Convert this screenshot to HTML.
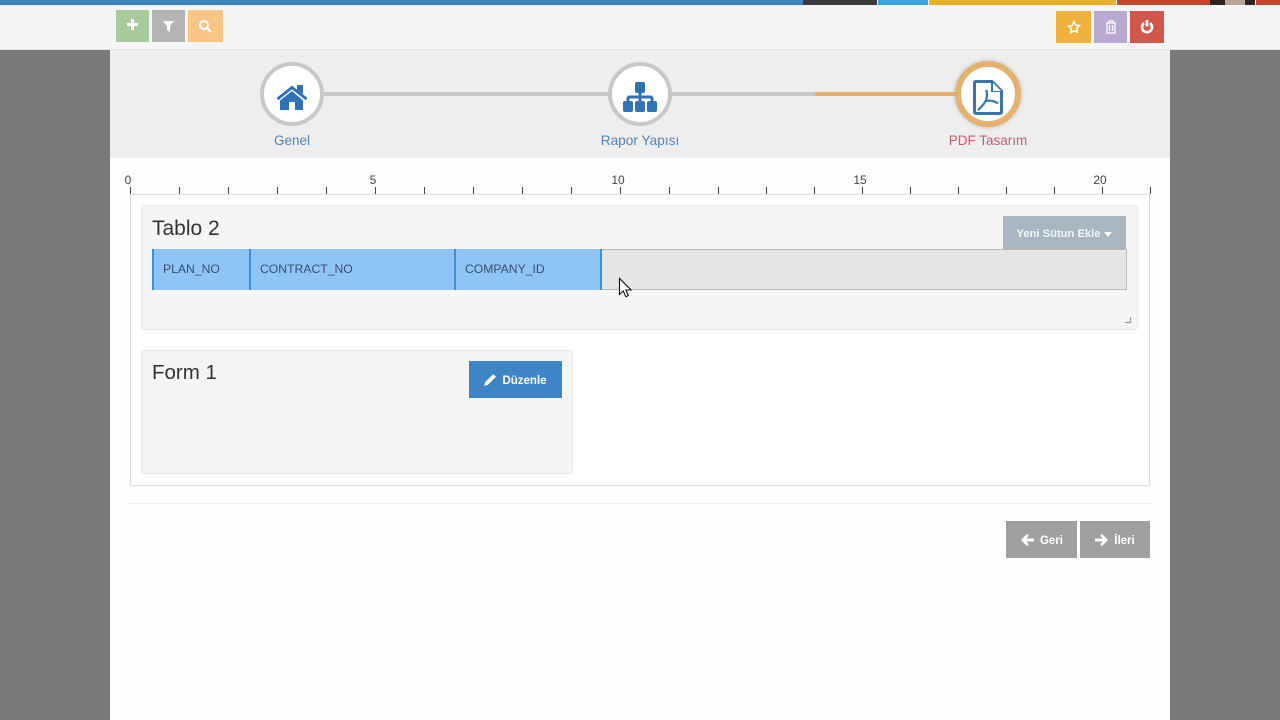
<!DOCTYPE html>
<html>
<head>
<meta charset="utf-8">
<style>
html,body{margin:0;padding:0;}
body{width:1280px;height:720px;position:relative;overflow:hidden;background:#7a7a7a;font-family:"Liberation Sans",sans-serif;}
.a{position:absolute;}
.t{position:absolute;white-space:nowrap;line-height:1;}
.b{position:absolute;display:flex;align-items:center;justify-content:center;color:#fff;}
.tick{position:absolute;top:187px;width:1px;height:7px;background:#444;}
.num{position:absolute;top:174px;font-size:12px;line-height:13px;color:#444;transform:translateX(-50%);}
.circle{position:absolute;box-sizing:border-box;border-radius:50%;background:#fff;}
.cell{position:absolute;top:249px;height:41px;box-sizing:border-box;background:#90c4f6;border-left:2px solid #3d8fd6;font-size:12.2px;line-height:41px;color:#34506f;padding-left:9px;}
</style>
</head>
<body>
<!-- top strip -->
<div class="a" style="left:0;top:0;width:1280px;height:50px;background:#f5f5f5;"></div>
<div class="a" style="left:0;top:0;width:803px;height:5px;background:#3f86bf;"></div>
<div class="a" style="left:0;top:5px;width:803px;height:1px;background:#dff0fa;"></div>
<div class="a" style="left:803px;top:0;width:74px;height:5px;background:#3a3a3e;"></div>
<div class="a" style="left:878px;top:0;width:50px;height:5px;background:#38a5de;"></div>
<div class="a" style="left:929px;top:0;width:187px;height:5px;background:#e9af2e;"></div>
<div class="a" style="left:1117px;top:0;width:93px;height:5px;background:#c5472f;"></div>
<div class="a" style="left:1210px;top:0;width:45px;height:5px;background:#2a2522;"></div>
<div class="a" style="left:1225px;top:0;width:20px;height:5px;background:#b9a596;"></div>
<div class="a" style="left:1256px;top:0;width:24px;height:5px;background:#c5472f;"></div>

<!-- top buttons -->
<div class="b" style="left:116px;top:10px;width:33px;height:32px;background:#a9c99e;">
<svg width="13" height="13" viewBox="0 0 13 13" style="margin-top:-3px"><path d="M5 1h3v4h4v3H8v4H5V8H1V5h4z" fill="#fff"/></svg></div>
<div class="b" style="left:152px;top:10px;width:33px;height:32px;background:#b4b4b4;">
<svg width="13" height="13" viewBox="0 0 13 13"><path d="M1 1h11L8 6v6L5 10V6z" fill="#fff"/></svg></div>
<div class="b" style="left:188px;top:10px;width:35px;height:32px;background:#f9c584;">
<svg width="14" height="14" viewBox="0 0 14 14" style="margin-left:-1px"><circle cx="6" cy="6" r="4" fill="none" stroke="#fff" stroke-width="1.900"/><path d="M9 9l4 4" stroke="#fff" stroke-width="2.400"/></svg></div>
<div class="b" style="left:1056px;top:11px;width:35px;height:32px;background:#f0b23e;">
<svg width="14" height="14" viewBox="0 0 14 14"><path d="M7 1.500l1.700 3.600 3.800.5-2.800 2.700.7 3.900L7 10.800l-3.400 1.900.7-3.900L1.500 6.100l3.800-.5z" fill="none" stroke="#fff" stroke-width="1.500"/></svg></div>
<div class="b" style="left:1094px;top:11px;width:33px;height:32px;background:#b8a9d0;">
<svg width="12" height="14" viewBox="0 0 12 14"><path d="M1 3h10M4 3V1h4v2M2 3v10h8V3M4.500 5v6M7.500 5v6" fill="none" stroke="#fff" stroke-width="1.300"/></svg></div>
<div class="b" style="left:1130px;top:11px;width:34px;height:32px;background:#d2574a;">
<svg width="14" height="14" viewBox="0 0 14 14"><path d="M4 3.200a5 5 0 1 0 6 0" fill="none" stroke="#fff" stroke-width="2.600"/><path d="M7 0v6.500" stroke="#fff" stroke-width="2.800"/></svg></div>

<!-- main -->
<div class="a" style="left:0;top:49px;width:1280px;height:1px;background:#e4e4e4;"></div>
<div class="a" style="left:110px;top:50px;width:1060px;height:670px;background:#fefefe;"></div>
<div class="a" style="left:110px;top:50px;width:1060px;height:108px;background:#eeeeee;"></div>

<!-- wizard -->
<div class="a" style="left:322px;top:92px;width:290px;height:4px;background:#c8c8c8;"></div>
<div class="a" style="left:668px;top:92px;width:147px;height:4px;background:#c8c8c8;"></div>
<div class="a" style="left:815px;top:92px;width:142px;height:4px;background:#e9b26c;"></div>

<div class="circle" style="left:260px;top:62px;width:64px;height:64px;border:4px solid #c8c8c8;"></div>
<svg class="a" style="left:276px;top:84px;" width="32" height="27" viewBox="0 0 32 27"><path d="M21 1h6v9l-6-4z" fill="#2f72b5"/><path d="M1.500 15L16 3.500 30.500 15" fill="none" stroke="#2f72b5" stroke-width="3"/><path d="M4 16.500L16 7l11 9.500V26h-8v-8h-6v8H4z" fill="#2f72b5"/></svg>

<div class="circle" style="left:608px;top:62px;width:64px;height:64px;border:4px solid #c8c8c8;"></div>
<svg class="a" style="left:622px;top:82px;" width="36" height="31" viewBox="0 0 36 31"><rect x="13" y="0" width="10" height="11" rx="2" fill="#2f72b5"/><path d="M18 10v10M6 20v-3.500a1.500 1.500 0 0 1 1.500-1.500h21a1.500 1.500 0 0 1 1.500 1.500V20" fill="none" stroke="#2f72b5" stroke-width="3"/><rect x="1" y="19" width="10" height="11" rx="2" fill="#2f72b5"/><rect x="13" y="19" width="10" height="11" rx="2" fill="#2f72b5"/><rect x="25" y="19" width="10" height="11" rx="2" fill="#2f72b5"/></svg>

<div class="circle" style="left:955px;top:61px;width:66px;height:66px;border:6px solid #e4b26f;box-shadow:0 0 4px rgba(120,120,120,.45);"></div>
<svg class="a" style="left:973px;top:80px;" width="30" height="35" viewBox="0 0 30 35"><path d="M2.500 1.500H19L28.500 11v21a1.500 1.500 0 0 1-1.500 1.500H3A1.500 1.500 0 0 1 1.500 32V2.500z" fill="#fff" stroke="#3a75a8" stroke-width="3"/><path d="M18 1.500V12h10.500z" fill="#3a75a8"/><path d="M20 3v8h8z" fill="#fff"/><path d="M13.500 10c.8 5 .8 8-1.500 12s-4 5.500-7 8M13 21c4-.8 8-.4 12 2.500" fill="none" stroke="#3a75a8" stroke-width="2.200"/></svg>

<div class="t" style="left:292px;top:134px;font-size:13.5px;color:#5584b4;transform:translateX(-50%);">Genel</div>
<div class="t" style="left:640px;top:134px;font-size:13.7px;color:#5584b4;transform:translateX(-50%);">Rapor Yapısı</div>
<div class="t" style="left:988px;top:134px;font-size:13.5px;color:#c0606a;transform:translateX(-50%);">PDF Tasarım</div>

<!-- ruler -->
<div class="a" style="left:130px;top:194px;width:1020px;height:292px;box-sizing:border-box;border:1px solid #dcdcdc;background:#fff;"></div>
<div class="tick" style="left:130px"></div><div class="tick" style="left:179px"></div><div class="tick" style="left:228px"></div><div class="tick" style="left:277px"></div><div class="tick" style="left:326px"></div><div class="tick" style="left:375px"></div><div class="tick" style="left:424px"></div><div class="tick" style="left:473px"></div><div class="tick" style="left:522px"></div><div class="tick" style="left:571px"></div><div class="tick" style="left:620px"></div><div class="tick" style="left:669px"></div><div class="tick" style="left:718px"></div><div class="tick" style="left:766px"></div><div class="tick" style="left:814px"></div><div class="tick" style="left:862px"></div><div class="tick" style="left:910px"></div><div class="tick" style="left:958px"></div><div class="tick" style="left:1006px"></div><div class="tick" style="left:1054px"></div><div class="tick" style="left:1102px"></div><div class="tick" style="left:1150px"></div>
<div class="num" style="left:128px">0</div>
<div class="num" style="left:373px">5</div>
<div class="num" style="left:618px">10</div>
<div class="num" style="left:860px">15</div>
<div class="num" style="left:1100px">20</div>

<!-- Tablo 2 -->
<div class="a" style="left:141px;top:205px;width:997px;height:125px;box-sizing:border-box;background:#f5f5f6;border:1px solid #e8e8e8;border-radius:3px;"></div>
<div class="t" style="left:152px;top:218px;font-size:21px;color:#333;">Tablo 2</div>
<div class="b" style="left:1003px;top:216px;width:123px;height:33px;background:#a9b5c1;font-size:11.200px;font-weight:bold;padding-top:2px;box-sizing:border-box;color:#f4f6f8;">Yeni Sütun Ekle<span style="display:inline-block;margin-left:4px;margin-top:1px;border-left:4.500px solid transparent;border-right:4.500px solid transparent;border-top:5px solid #fff;"></span></div>
<div class="a" style="left:152px;top:249px;width:975px;height:41px;box-sizing:border-box;background:#e5e5e5;border:1px solid #b8b8b8;"></div>
<div class="cell" style="left:152px;width:97px;">PLAN_NO</div>
<div class="cell" style="left:249px;width:205px;">CONTRACT_NO</div>
<div class="cell" style="left:454px;width:146px;">COMPANY_ID</div>
<div class="a" style="left:600px;top:249px;width:2px;height:41px;background:#3d8fd6;"></div>
<svg class="a" style="left:1124px;top:316px;" width="8" height="8" viewBox="0 0 8 8"><path d="M6.500 1v5.500H1" fill="none" stroke="#999" stroke-width="1.300"/></svg>

<!-- Form 1 -->
<div class="a" style="left:141px;top:350px;width:432px;height:124px;box-sizing:border-box;background:#f5f5f6;border:1px solid #e8e8e8;border-radius:3px;"></div>
<div class="t" style="left:152px;top:363px;font-size:20.5px;color:#333;">Form 1</div>
<div class="b" style="left:469px;top:361px;width:93px;height:37px;background:#3f85c6;font-size:11.500px;font-weight:bold;padding-top:2px;box-sizing:border-box;">
<svg width="14" height="14" viewBox="0 0 13 13" style="margin-right:5px;margin-left:-1px;margin-top:-2px"><path d="M9.500 1L12 3.500 4.500 11 1 12l1-3.500z" fill="#fff"/></svg>Düzenle</div>

<!-- footer -->
<div class="a" style="left:128px;top:503px;width:1024px;height:1px;background:#f0f0f0;"></div>
<div class="b" style="left:1006px;top:521px;width:71px;height:37px;background:#a0a0a0;font-size:11.500px;font-weight:bold;padding-left:1px;padding-top:2px;box-sizing:border-box;">
<svg width="13" height="12" viewBox="0 0 13 12" style="margin-right:6px;margin-top:-2px"><path d="M6 0l1.800 1.800L5 4.500h8v3H5l2.800 2.700L6 12 0 6z" fill="#fff"/></svg>Geri</div>
<div class="b" style="left:1080px;top:521px;width:70px;height:37px;background:#a0a0a0;font-size:11.500px;font-weight:bold;padding-top:2px;box-sizing:border-box;">
<svg width="13" height="12" viewBox="0 0 13 12" style="margin-right:6px;margin-top:-2px"><path d="M7 0L5.200 1.800 8 4.500H0v3h8l-2.800 2.700L7 12l6-6z" fill="#fff"/></svg>İleri</div>

<!-- cursor -->
<svg class="a" style="left:618px;top:277px;" width="15" height="22" viewBox="0 0 15 22"><path d="M1.500 1.500v16l3.800-3.600 2.400 5.800 2.600-1.100-2.400-5.600h5.200z" fill="#fff" stroke="#111" stroke-width="1.100"/></svg>
</body>
</html>
